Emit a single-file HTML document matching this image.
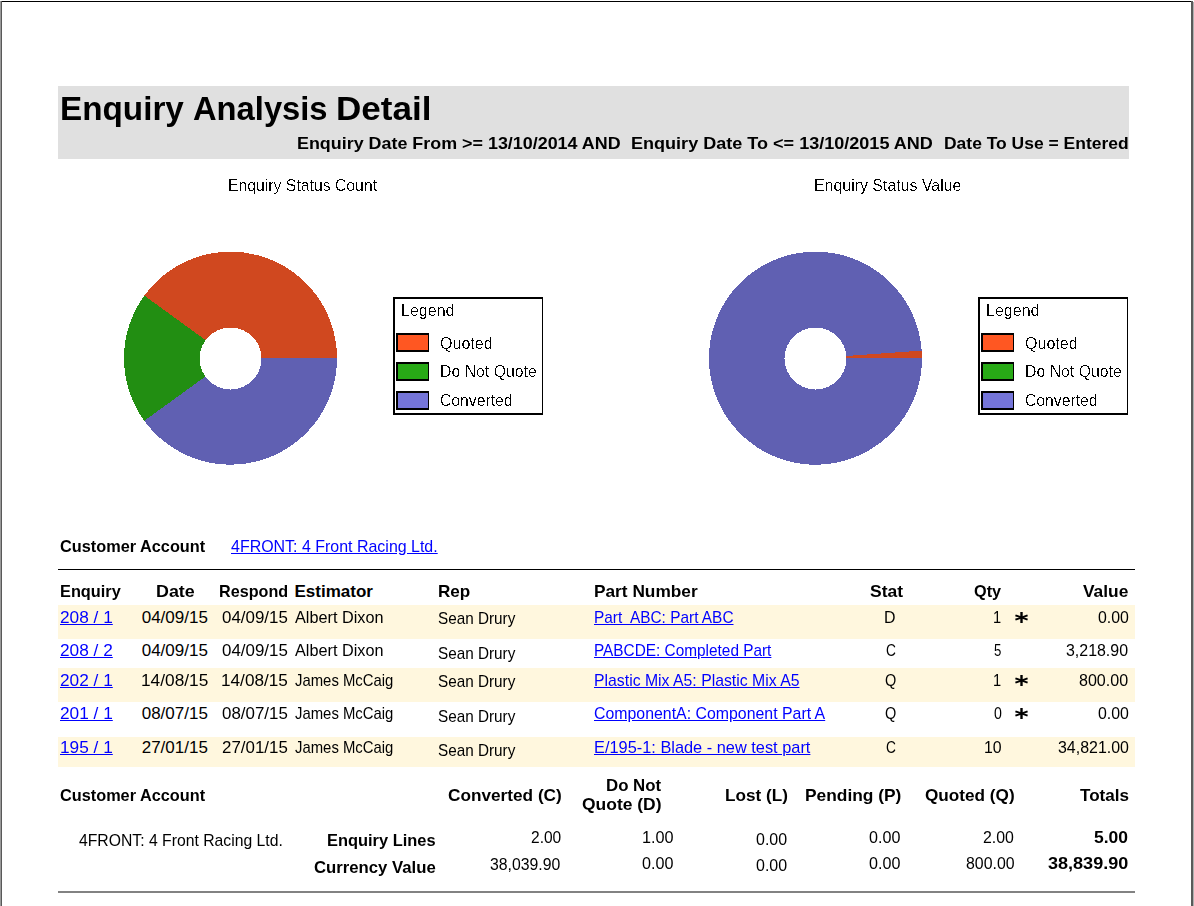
<!DOCTYPE html>
<html><head><meta charset="utf-8"><title>Enquiry Analysis Detail</title>
<style>
html,body{margin:0;padding:0;background:#fff;}
body{width:1194px;height:906px;position:relative;overflow:hidden;font-family:"Liberation Sans",sans-serif;}
.t{position:absolute;white-space:pre;line-height:20px;transform-origin:0 0;}
.u{text-decoration:underline;}
.bl{position:absolute;}
.pies{position:absolute;left:0;top:0;}
.lg{position:absolute;width:147px;height:114px;border-style:solid;border-color:#000;border-width:2px 1px 2px 2px;background:#fff;}
.sw{position:absolute;width:30px;height:15px;border-style:solid;border-color:#000;border-width:2px 1px 2px 2px;}
.ch{filter:url(#alias);}
.band{position:absolute;left:58px;width:1077px;background:#fff7de;}
</style></head><body>
<div class="bl" style="left:1px;top:1px;width:1191px;height:1px;background:#000"></div>
<div class="bl" style="left:0;top:1px;width:1px;height:905px;background:#9a9a9a"></div>
<div class="bl" style="left:1px;top:1px;width:1px;height:905px;background:#595959"></div>
<div class="bl" style="left:1191px;top:1px;width:2px;height:905px;background:#5a5a5a"></div>
<div class="bl" style="left:1193px;top:2px;width:1px;height:904px;background:#b0b0b0"></div>
<div class="bl" style="left:58px;top:86px;width:1071px;height:73px;background:#e0e0e0"></div>
<svg width="0" height="0" style="position:absolute"><filter id="alias" x="0" y="0" width="100%" height="100%" color-interpolation-filters="sRGB"><feColorMatrix type="matrix" values="0 0 0 0 0  0 0 0 0 0  0 0 0 0 0  0 0 0 1 0"/><feComponentTransfer><feFuncA type="discrete" tableValues="0 0 0 1 1"/></feComponentTransfer></filter></svg>
<svg class="pies" width="1194" height="906"><g shape-rendering="crispEdges"><path d="M230.5,358.2 L337.00,358.20 A106.5,106.5 0 0 0 144.34,295.60 Z" fill="#d0481f"/><path d="M230.5,358.2 L144.34,295.60 A106.5,106.5 0 0 0 144.34,420.80 Z" fill="#228e12"/><path d="M230.5,358.2 L144.34,420.80 A106.5,106.5 0 0 0 337.00,358.20 Z" fill="#6060b2"/><circle cx="230.5" cy="358.5" r="31" fill="#fff"/></g><g shape-rendering="crispEdges"><path d="M815.5,358.2 L921.74,350.77 A106.5,106.5 0 1 0 922.00,358.20 Z" fill="#6060b2"/><path d="M815.5,358.2 L922.00,358.20 A106.5,106.5 0 0 0 921.73,350.59 Z" fill="#d0481f"/><circle cx="815.5" cy="358.5" r="31" fill="#fff"/></g></svg>
<div class="lg" style="left:393px;top:297px"></div><div class="sw" style="left:396px;top:333px;background:#ff5722"></div><div class="sw" style="left:396px;top:362px;background:#28aa16"></div><div class="sw" style="left:396px;top:391px;background:#7575d9"></div>
<div class="lg" style="left:978px;top:297px"></div><div class="sw" style="left:981px;top:333px;background:#ff5722"></div><div class="sw" style="left:981px;top:362px;background:#28aa16"></div><div class="sw" style="left:981px;top:391px;background:#7575d9"></div>
<div class="bl" style="left:58px;top:569px;width:1077px;height:1px;background:#000"></div>
<div class="band" style="top:605px;height:34px"></div><div class="band" style="top:668px;height:34px"></div><div class="band" style="top:737px;height:30px"></div>
<div class="bl" style="left:58px;top:891px;width:1077px;height:2px;background:#828282"></div>
<div class="t" style="left:59.98px;top:99px;font-size:33px;font-weight:700;color:#000;transform:scaleX(1.0083)">Enquiry</div>
<div class="t" style="left:192.80px;top:99px;font-size:33px;font-weight:700;color:#000;transform:scaleX(0.9912)">Analysis</div>
<div class="t" style="left:335.88px;top:99px;font-size:33px;font-weight:700;color:#000;transform:scaleX(1.0619)">Detail</div>
<div class="t" style="left:297.45px;top:134px;font-size:17px;font-weight:700;color:#000;transform:scaleX(1.0527)">Enquiry Date From &gt;= 13/10/2014 AND</div>
<div class="t" style="left:630.84px;top:134px;font-size:17px;font-weight:700;color:#000;transform:scaleX(1.0615)">Enquiry Date To &lt;= 13/10/2015 AND</div>
<div class="t" style="left:943.77px;top:134px;font-size:17px;font-weight:700;color:#000;transform:scaleX(1.0277)">Date To Use = Entered</div>
<div class="t ch" style="left:227.81px;top:176px;font-size:16px;font-weight:400;color:#000;transform:scaleX(0.9857)">Enquiry Status Count</div>
<div class="t ch" style="left:813.51px;top:176px;font-size:16px;font-weight:400;color:#000;transform:scaleX(0.9943)">Enquiry Status Value</div>
<div class="t ch" style="left:400.60px;top:301px;font-size:16px;font-weight:400;color:#000;transform:scaleX(1.0021)">Legend</div>
<div class="t ch" style="left:440.00px;top:334px;font-size:16px;font-weight:400;color:#000;transform:scaleX(1.0022)">Quoted</div>
<div class="t ch" style="left:439.71px;top:362px;font-size:16px;font-weight:400;color:#000;transform:scaleX(0.9894)">Do Not Quote</div>
<div class="t ch" style="left:440.00px;top:391px;font-size:16px;font-weight:400;color:#000;transform:scaleX(0.9832)">Converted</div>
<div class="t ch" style="left:985.60px;top:301px;font-size:16px;font-weight:400;color:#000;transform:scaleX(1.0021)">Legend</div>
<div class="t ch" style="left:1025.00px;top:334px;font-size:16px;font-weight:400;color:#000;transform:scaleX(1.0022)">Quoted</div>
<div class="t ch" style="left:1024.71px;top:362px;font-size:16px;font-weight:400;color:#000;transform:scaleX(0.9894)">Do Not Quote</div>
<div class="t ch" style="left:1025.00px;top:391px;font-size:16px;font-weight:400;color:#000;transform:scaleX(0.9832)">Converted</div>
<div class="t" style="left:60.40px;top:537px;font-size:17px;font-weight:700;color:#000;transform:scaleX(0.9586)">Customer Account</div>
<div class="t u" style="left:231.10px;top:537px;font-size:17px;font-weight:400;color:#0000ff;transform:scaleX(0.9389)">4FRONT: 4 Front Racing Ltd.</div>
<div class="t" style="left:59.54px;top:582px;font-size:17px;font-weight:700;color:#000;transform:scaleX(0.9597)">Enquiry</div>
<div class="t" style="left:155.75px;top:582px;font-size:17px;font-weight:700;color:#000;transform:scaleX(1.0511)">Date</div>
<div class="t" style="left:218.65px;top:582px;font-size:17px;font-weight:700;color:#000;transform:scaleX(0.9504)">Respond</div>
<div class="t" style="left:294.50px;top:582px;font-size:17px;font-weight:700;color:#000">Estimator</div>
<div class="t" style="left:437.69px;top:582px;font-size:17px;font-weight:700;color:#000;transform:scaleX(1.0055)">Rep</div>
<div class="t" style="left:593.58px;top:582px;font-size:17px;font-weight:700;color:#000;transform:scaleX(1.0157)">Part Number</div>
<div class="t" style="left:870.10px;top:582px;font-size:17px;font-weight:700;color:#000;transform:scaleX(1.0291)">Stat</div>
<div class="t" style="left:974.40px;top:582px;font-size:17px;font-weight:700;color:#000;transform:scaleX(0.9555)">Qty</div>
<div class="t" style="left:1083.20px;top:582px;font-size:17px;font-weight:700;color:#000;transform:scaleX(1.0213)">Value</div>
<div class="t u" style="left:60.00px;top:608px;font-size:17px;font-weight:400;color:#0000ff;transform:scaleX(1.0154)">208 / 1</div>
<div class="t" style="left:141.70px;top:608px;font-size:17px;font-weight:400;color:#000">04/09/15</div>
<div class="t" style="left:222.00px;top:608px;font-size:17px;font-weight:400;color:#000;transform:scaleX(0.9951)">04/09/15</div>
<div class="t" style="left:295.00px;top:608px;font-size:17px;font-weight:400;color:#000;transform:scaleX(0.9551)">Albert Dixon</div>
<div class="t" style="left:438.20px;top:609px;font-size:17px;font-weight:400;color:#000;transform:scaleX(0.8996)">Sean Drury</div>
<div class="t u" style="left:594.30px;top:608px;font-size:17px;font-weight:400;color:#0000ff;transform:scaleX(0.9058)">Part  ABC: Part ABC</div>
<div class="t" style="left:884.36px;top:608px;font-size:17px;font-weight:400;color:#000;transform:scaleX(0.9364)">D</div>
<div class="t" style="left:993.24px;top:608px;font-size:17px;font-weight:400;color:#000;transform:scaleX(0.8625)">1</div>
<div class="t" style="left:1097.50px;top:608px;font-size:17px;font-weight:400;color:#000;transform:scaleX(0.9347)">0.00</div>
<div class="t u" style="left:60.00px;top:641px;font-size:17px;font-weight:400;color:#0000ff;transform:scaleX(1.0154)">208 / 2</div>
<div class="t" style="left:141.70px;top:641px;font-size:17px;font-weight:400;color:#000">04/09/15</div>
<div class="t" style="left:222.00px;top:641px;font-size:17px;font-weight:400;color:#000;transform:scaleX(0.9951)">04/09/15</div>
<div class="t" style="left:295.00px;top:641px;font-size:17px;font-weight:400;color:#000;transform:scaleX(0.9551)">Albert Dixon</div>
<div class="t" style="left:438.20px;top:644px;font-size:17px;font-weight:400;color:#000;transform:scaleX(0.8996)">Sean Drury</div>
<div class="t u" style="left:594.30px;top:641px;font-size:17px;font-weight:400;color:#0000ff;transform:scaleX(0.9041)">PABCDE: Completed Part</div>
<div class="t" style="left:886.00px;top:641px;font-size:17px;font-weight:400;color:#000;transform:scaleX(0.8083)">C</div>
<div class="t" style="left:994.00px;top:641px;font-size:17px;font-weight:400;color:#000;transform:scaleX(0.7778)">5</div>
<div class="t" style="left:1066.40px;top:641px;font-size:17px;font-weight:400;color:#000;transform:scaleX(0.9373)">3,218.90</div>
<div class="t u" style="left:60.00px;top:671px;font-size:17px;font-weight:400;color:#0000ff;transform:scaleX(1.0154)">202 / 1</div>
<div class="t" style="left:140.68px;top:671px;font-size:17px;font-weight:400;color:#000;transform:scaleX(1.0167)">14/08/15</div>
<div class="t" style="left:220.99px;top:671px;font-size:17px;font-weight:400;color:#000;transform:scaleX(1.0105)">14/08/15</div>
<div class="t" style="left:295.00px;top:671px;font-size:17px;font-weight:400;color:#000;transform:scaleX(0.8753)">James McCaig</div>
<div class="t" style="left:438.20px;top:672px;font-size:17px;font-weight:400;color:#000;transform:scaleX(0.8996)">Sean Drury</div>
<div class="t u" style="left:594.30px;top:671px;font-size:17px;font-weight:400;color:#0000ff;transform:scaleX(0.9295)">Plastic Mix A5: Plastic Mix A5</div>
<div class="t" style="left:885.30px;top:671px;font-size:17px;font-weight:400;color:#000;transform:scaleX(0.8538)">Q</div>
<div class="t" style="left:993.24px;top:671px;font-size:17px;font-weight:400;color:#000;transform:scaleX(0.8625)">1</div>
<div class="t" style="left:1079.30px;top:671px;font-size:17px;font-weight:400;color:#000;transform:scaleX(0.9449)">800.00</div>
<div class="t u" style="left:60.00px;top:704px;font-size:17px;font-weight:400;color:#0000ff;transform:scaleX(1.0154)">201 / 1</div>
<div class="t" style="left:141.70px;top:704px;font-size:17px;font-weight:400;color:#000">08/07/15</div>
<div class="t" style="left:222.00px;top:704px;font-size:17px;font-weight:400;color:#000;transform:scaleX(0.9951)">08/07/15</div>
<div class="t" style="left:295.00px;top:704px;font-size:17px;font-weight:400;color:#000;transform:scaleX(0.8753)">James McCaig</div>
<div class="t" style="left:438.20px;top:707px;font-size:17px;font-weight:400;color:#000;transform:scaleX(0.8996)">Sean Drury</div>
<div class="t u" style="left:594.30px;top:704px;font-size:17px;font-weight:400;color:#0000ff;transform:scaleX(0.9338)">ComponentA: Component Part A</div>
<div class="t" style="left:885.30px;top:704px;font-size:17px;font-weight:400;color:#000;transform:scaleX(0.8538)">Q</div>
<div class="t" style="left:993.50px;top:704px;font-size:17px;font-weight:400;color:#000;transform:scaleX(0.8333)">0</div>
<div class="t" style="left:1097.50px;top:704px;font-size:17px;font-weight:400;color:#000;transform:scaleX(0.9347)">0.00</div>
<div class="t u" style="left:60.00px;top:738px;font-size:17px;font-weight:400;color:#0000ff;transform:scaleX(1.0154)">195 / 1</div>
<div class="t" style="left:141.70px;top:738px;font-size:17px;font-weight:400;color:#000">27/01/15</div>
<div class="t" style="left:222.00px;top:738px;font-size:17px;font-weight:400;color:#000;transform:scaleX(0.9951)">27/01/15</div>
<div class="t" style="left:295.00px;top:738px;font-size:17px;font-weight:400;color:#000;transform:scaleX(0.8753)">James McCaig</div>
<div class="t" style="left:438.20px;top:741px;font-size:17px;font-weight:400;color:#000;transform:scaleX(0.8996)">Sean Drury</div>
<div class="t u" style="left:594.30px;top:738px;font-size:17px;font-weight:400;color:#0000ff;transform:scaleX(0.9622)">E/195-1: Blade - new test part</div>
<div class="t" style="left:886.00px;top:738px;font-size:17px;font-weight:400;color:#000;transform:scaleX(0.8083)">C</div>
<div class="t" style="left:983.77px;top:738px;font-size:17px;font-weight:400;color:#000;transform:scaleX(0.9339)">10</div>
<div class="t" style="left:1057.50px;top:738px;font-size:17px;font-weight:400;color:#000;transform:scaleX(0.9378)">34,821.00</div>
<div class="t" style="left:60.20px;top:786px;font-size:17px;font-weight:700;color:#000;transform:scaleX(0.9579)">Customer Account</div>
<div class="t" style="left:448.40px;top:786px;font-size:17px;font-weight:700;color:#000;transform:scaleX(1.0122)">Converted (C)</div>
<div class="t" style="left:605.91px;top:776px;font-size:17px;font-weight:700;color:#000;transform:scaleX(0.9901)">Do Not</div>
<div class="t" style="left:581.90px;top:795px;font-size:17px;font-weight:700;color:#000;transform:scaleX(1.0265)">Quote (D)</div>
<div class="t" style="left:724.59px;top:786px;font-size:17px;font-weight:700;color:#000;transform:scaleX(1.0090)">Lost (L)</div>
<div class="t" style="left:804.58px;top:786px;font-size:17px;font-weight:700;color:#000;transform:scaleX(1.0207)">Pending (P)</div>
<div class="t" style="left:924.70px;top:786px;font-size:17px;font-weight:700;color:#000;transform:scaleX(1.0102)">Quoted (Q)</div>
<div class="t" style="left:1079.60px;top:786px;font-size:17px;font-weight:700;color:#000;transform:scaleX(1.0053)">Totals</div>
<div class="t" style="left:79.40px;top:831px;font-size:17px;font-weight:400;color:#000;transform:scaleX(0.9256)">4FRONT: 4 Front Racing Ltd.</div>
<div class="t" style="left:326.73px;top:831px;font-size:17px;font-weight:700;color:#000;transform:scaleX(0.9662)">Enquiry Lines</div>
<div class="t" style="left:313.60px;top:858px;font-size:17px;font-weight:700;color:#000;transform:scaleX(0.9836)">Currency Value</div>
<div class="t" style="left:530.50px;top:828px;font-size:17px;font-weight:400;color:#000;transform:scaleX(0.9132)">2.00</div>
<div class="t" style="left:490.40px;top:855px;font-size:17px;font-weight:400;color:#000;transform:scaleX(0.9298)">38,039.90</div>
<div class="t" style="left:641.95px;top:828px;font-size:17px;font-weight:400;color:#000;transform:scaleX(0.9547)">1.00</div>
<div class="t" style="left:642.10px;top:854px;font-size:17px;font-weight:400;color:#000;transform:scaleX(0.9500)">0.00</div>
<div class="t" style="left:756.40px;top:830px;font-size:17px;font-weight:400;color:#000;transform:scaleX(0.9408)">0.00</div>
<div class="t" style="left:756.40px;top:856px;font-size:17px;font-weight:400;color:#000;transform:scaleX(0.9408)">0.00</div>
<div class="t" style="left:869.40px;top:828px;font-size:17px;font-weight:400;color:#000;transform:scaleX(0.9469)">0.00</div>
<div class="t" style="left:869.40px;top:854px;font-size:17px;font-weight:400;color:#000;transform:scaleX(0.9469)">0.00</div>
<div class="t" style="left:983.10px;top:828px;font-size:17px;font-weight:400;color:#000;transform:scaleX(0.9347)">2.00</div>
<div class="t" style="left:965.50px;top:854px;font-size:17px;font-weight:400;color:#000;transform:scaleX(0.9332)">800.00</div>
<div class="t" style="left:1093.80px;top:828px;font-size:17px;font-weight:700;color:#000;transform:scaleX(1.0297)">5.00</div>
<div class="t" style="left:1047.60px;top:854px;font-size:17px;font-weight:700;color:#000;transform:scaleX(1.0615)">38,839.90</div>
<svg class="bl" style="left:1013px;top:609px" width="17" height="17"><g stroke="#000" stroke-linecap="butt"><line x1="8.5" y1="3" x2="8.5" y2="14" stroke-width="2.4"/><line x1="2.4" y1="6.3" x2="14.6" y2="10.7" stroke-width="1.9"/><line x1="2.4" y1="10.7" x2="14.6" y2="6.3" stroke-width="1.9"/></g></svg>
<svg class="bl" style="left:1013px;top:672px" width="17" height="17"><g stroke="#000" stroke-linecap="butt"><line x1="8.5" y1="3" x2="8.5" y2="14" stroke-width="2.4"/><line x1="2.4" y1="6.3" x2="14.6" y2="10.7" stroke-width="1.9"/><line x1="2.4" y1="10.7" x2="14.6" y2="6.3" stroke-width="1.9"/></g></svg>
<svg class="bl" style="left:1013px;top:705px" width="17" height="17"><g stroke="#000" stroke-linecap="butt"><line x1="8.5" y1="3" x2="8.5" y2="14" stroke-width="2.4"/><line x1="2.4" y1="6.3" x2="14.6" y2="10.7" stroke-width="1.9"/><line x1="2.4" y1="10.7" x2="14.6" y2="6.3" stroke-width="1.9"/></g></svg>
</body></html>
